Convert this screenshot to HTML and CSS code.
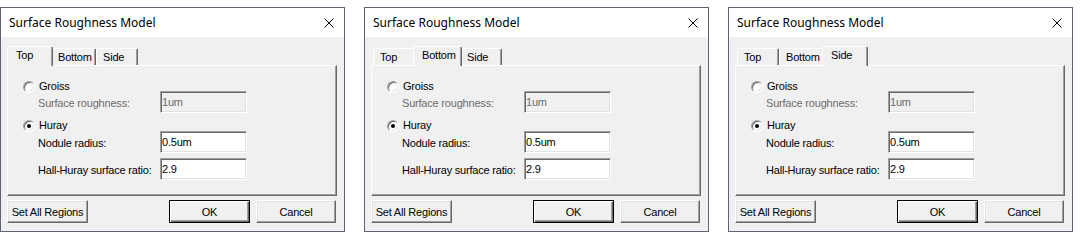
FILE: index.html
```html
<!DOCTYPE html>
<html lang="en">

<head>
  <meta charset="UTF-8">
  <meta name="viewport" content="width=device-width, initial-scale=1.0">
  <title>Surface Roughness Model</title>
  <link rel="stylesheet" href="styles.css">
</head>

<body>
  <div class="screen">
    <!-- Top tab -->
    <div class="dialog">
      <div class="titlebar">
        <span class="title">Surface Roughness Model</span>
        <svg class="close" width="10" height="10" viewBox="0 0 10 10"><path d="M0.5 0.5L9.5 9.5M9.5 0.5L0.5 9.5" stroke="#000" stroke-width="1" fill="none"/></svg>
      </div>
      <div class="body">
        <div class="tabs">
          <div class="tab tab-top active">Top</div>
          <div class="tab tab-bottom">Bottom</div>
          <div class="tab tab-side">Side</div>
        </div>
        <div class="panel">
          <div class="option"><span class="radio"></span>Groiss</div>
          <div class="field disabled"><label>Surface roughness:</label><input type="text" value="1um" disabled></div>
          <div class="option option-huray"><span class="radio checked"></span>Huray</div>
          <div class="field field-nodule"><label>Nodule radius:</label><input type="text" value="0.5um"></div>
          <div class="field field-ratio"><label>Hall-Huray surface ratio:</label><input type="text" value="2.9"></div>
        </div>
        <div class="buttons">
          <button class="btn btn-wide">Set All Regions</button>
          <button class="btn btn-default">OK</button>
          <button class="btn btn-cancel">Cancel</button>
        </div>
      </div>
    </div>

    <!-- Bottom tab -->
    <div class="dialog">
      <div class="titlebar">
        <span class="title">Surface Roughness Model</span>
        <svg class="close" width="10" height="10" viewBox="0 0 10 10"><path d="M0.5 0.5L9.5 9.5M9.5 0.5L0.5 9.5" stroke="#000" stroke-width="1" fill="none"/></svg>
      </div>
      <div class="body">
        <div class="tabs">
          <div class="tab tab-top">Top</div>
          <div class="tab tab-bottom active">Bottom</div>
          <div class="tab tab-side">Side</div>
        </div>
        <div class="panel">
          <div class="option"><span class="radio"></span>Groiss</div>
          <div class="field disabled"><label>Surface roughness:</label><input type="text" value="1um" disabled></div>
          <div class="option option-huray"><span class="radio checked"></span>Huray</div>
          <div class="field field-nodule"><label>Nodule radius:</label><input type="text" value="0.5um"></div>
          <div class="field field-ratio"><label>Hall-Huray surface ratio:</label><input type="text" value="2.9"></div>
        </div>
        <div class="buttons">
          <button class="btn btn-wide">Set All Regions</button>
          <button class="btn btn-default">OK</button>
          <button class="btn btn-cancel">Cancel</button>
        </div>
      </div>
    </div>

    <!-- Side tab -->
    <div class="dialog">
      <div class="titlebar">
        <span class="title">Surface Roughness Model</span>
        <svg class="close" width="10" height="10" viewBox="0 0 10 10"><path d="M0.5 0.5L9.5 9.5M9.5 0.5L0.5 9.5" stroke="#000" stroke-width="1" fill="none"/></svg>
      </div>
      <div class="body">
        <div class="tabs">
          <div class="tab tab-top">Top</div>
          <div class="tab tab-bottom">Bottom</div>
          <div class="tab tab-side active">Side</div>
        </div>
        <div class="panel">
          <div class="option"><span class="radio"></span>Groiss</div>
          <div class="field disabled"><label>Surface roughness:</label><input type="text" value="1um" disabled></div>
          <div class="option option-huray"><span class="radio checked"></span>Huray</div>
          <div class="field field-nodule"><label>Nodule radius:</label><input type="text" value="0.5um"></div>
          <div class="field field-ratio"><label>Hall-Huray surface ratio:</label><input type="text" value="2.9"></div>
        </div>
        <div class="buttons">
          <button class="btn btn-wide">Set All Regions</button>
          <button class="btn btn-default">OK</button>
          <button class="btn btn-cancel">Cancel</button>
        </div>
      </div>
    </div>
  </div>
</body>

</html>
```

FILE: styles.css
```css
* {
  box-sizing: border-box;
}

body {
  margin: 0;
  background-color: #fff;
  font-family: "Liberation Sans", Arial, sans-serif;
  font-size: 11px;
  letter-spacing: -0.2px;
  color: #000;
}

.screen {
  display: flex;
  gap: 19px;
  padding-top: 7px;
}

.dialog {
  flex: none;
  width: 345px;
  border: 1px solid #5b6470;
  background-color: #f0f0f0;
}

.titlebar {
  height: 29px;
  background-color: #fff;
  display: flex;
  align-items: center;
  padding-left: 8px;
}

.title {
  font-family: "Noto Sans", "Liberation Sans", sans-serif;
  font-size: 12px;
  letter-spacing: 0;
}

.close {
  margin-left: auto;
  margin-right: 10px;
}

.body {
  padding: 9px 7px 8px 6px;
}

/* tab strip */
.tabs {
  display: flex;
  align-items: flex-end;
  height: 19px;
  padding-left: 2px;
  position: relative;
  z-index: 1;
}

.tab {
  height: 17px;
  padding: 2px 0 0 6px;
  line-height: 13px;
  border: 1px solid;
  border-bottom: none;
  border-color: #fff #696969 transparent #fff;
  border-radius: 2px 2px 0 0;
  box-shadow: inset -1px 0 #a0a0a0;
  background-color: #f0f0f0;
  white-space: nowrap;
}

.tab-top {
  width: 42px;
}

.tab-bottom {
  width: 45px;
}

.tab-side {
  width: 42px;
}

.tab.active {
  position: relative;
  z-index: 1;
  height: 20px;
  margin: 0 -2px -1px;
  padding-left: 8px;
}

.tab-top.active {
  width: 46px;
}

.tab-bottom.active {
  width: 49px;
}

.tab-side.active {
  width: 46px;
}

/* page */
.panel {
  height: 131px;
  border: 1px solid;
  border-color: #fff #696969 #696969 #fff;
  box-shadow: inset -1px -1px #a0a0a0;
  padding: 14px 0 0 15px;
}

.option {
  display: flex;
  align-items: center;
  height: 13px;
  line-height: 13px;
}

.option-huray {
  margin-top: 6px;
}

.radio {
  position: relative;
  width: 12px;
  height: 12px;
  margin-right: 4px;
  border-radius: 50%;
  border: 1px solid;
  border-color: #a0a0a0 #fff #fff #a0a0a0;
  box-shadow: inset 1px 1px #696969, inset -1px -1px #e3e3e3;
  background-color: #fff;
}

.radio.checked::after {
  content: "";
  position: absolute;
  left: 3px;
  top: 3px;
  width: 4px;
  height: 4px;
  border-radius: 50%;
  background-color: #000;
}

.field {
  display: flex;
  align-items: center;
  height: 22px;
  margin-top: -2px;
}

.field-nodule {
  margin-top: -1px;
}

.field-ratio {
  margin-top: 5px;
}

.field label {
  width: 137px;
  padding: 2px 0 0 15px;
  line-height: 13px;
}

.field input {
  width: 87px;
  height: 22px;
  margin: 0;
  padding: 0 1px;
  border: 1px solid;
  border-color: #a0a0a0 #fff #fff #a0a0a0;
  box-shadow: inset 1px 1px #696969, inset -1px -1px #e3e3e3;
  background-color: #fff;
  font-family: inherit;
  font-size: 11px;
  letter-spacing: -0.2px;
  color: #000;
  outline: none;
}

.field.disabled label {
  color: #6d6d6d;
}

.field.disabled input {
  background-color: #f0f0f0;
  color: #6d6d6d;
}

/* buttons */
.buttons {
  display: flex;
  margin-top: 4px;
  padding-right: 1px;
}

.btn {
  height: 23px;
  margin: 0;
  padding: 2px 0 0;
  line-height: 13px;
  border: 1px solid;
  border-color: #fff #696969 #696969 #fff;
  box-shadow: inset -1px -1px #a0a0a0, inset 1px 1px #e3e3e3;
  background-color: #f0f0f0;
  font-family: inherit;
  font-size: 11px;
  letter-spacing: -0.2px;
  color: #000;
}

.btn-wide {
  width: 81px;
  margin-right: auto;
}

.btn-default {
  width: 81px;
  border-color: #000;
  box-shadow: inset 1px 1px #fff, inset -1px -1px #696969, inset -2px -2px #a0a0a0;
}

.btn-cancel {
  width: 80px;
  margin-left: 6px;
}
```
